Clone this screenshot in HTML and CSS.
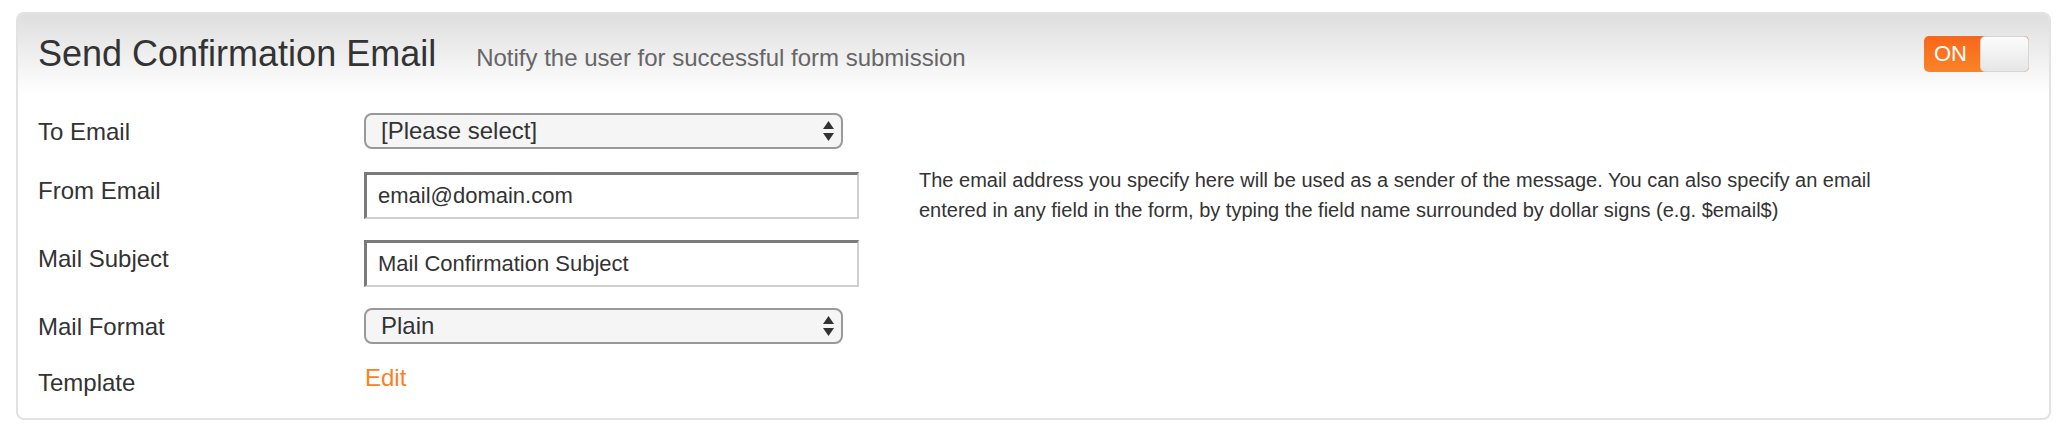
FILE: index.html
```html
<!DOCTYPE html>
<html lang="en">
<head>
<meta charset="utf-8">
<title>Send Confirmation Email</title>
<link rel="stylesheet" href="styles.css">
</head>
<body>
<section class="panel">
  <header class="panel-head">
    <div class="head-text">
      <h2 class="title">Send Confirmation Email</h2>
      <span class="subtitle">Notify the user for successful form submission</span>
    </div>
    <div class="toggle">
      <span class="toggle-label">ON</span>
      <span class="toggle-knob"></span>
    </div>
  </header>
  <div class="panel-body">
    <div class="row">
      <label class="label">To Email</label>
      <div class="select">
        <span>[Please select]</span>
        <svg class="arrows" width="11" height="20" viewBox="0 0 11 20"><polygon points="0,8 5.5,0 11,8" fill="#333"/><polygon points="0,12 11,12 5.5,20" fill="#333"/></svg>
      </div>
    </div>
    <div class="row">
      <label class="label">From Email</label>
      <div class="input">email@domain.com</div>
      <p class="help">The email address you specify here will be used as a sender of the message. You can also specify an email entered in any field in the form, by typing the field name surrounded by dollar signs (e.g. $email$)</p>
    </div>
    <div class="row">
      <label class="label">Mail Subject</label>
      <div class="input">Mail Confirmation Subject</div>
    </div>
    <div class="row">
      <label class="label">Mail Format</label>
      <div class="select">
        <span>Plain</span>
        <svg class="arrows" width="11" height="20" viewBox="0 0 11 20"><polygon points="0,8 5.5,0 11,8" fill="#333"/><polygon points="0,12 11,12 5.5,20" fill="#333"/></svg>
      </div>
    </div>
    <div class="row row-last">
      <label class="label">Template</label>
      <a class="edit" href="#">Edit</a>
    </div>
  </div>
</section>
</body>
</html>
```
FILE: styles.css
```css
* { box-sizing: border-box; }
html, body { background: #fff; }
body {
  margin: 12px 15px 0 16px;
  font-family: "Liberation Sans", Arial, Helvetica, sans-serif;
  color: #333;
}
.panel {
  border: 2px solid #e2e2e2;
  border-radius: 8px;
  overflow: hidden;
  background: #fff;
}
.panel-head {
  display: flex;
  align-items: center;
  justify-content: space-between;
  padding: 20px;
  background: linear-gradient(#dedede, #ffffff);
}
.head-text {
  display: flex;
  align-items: baseline;
}
.title {
  margin: 0;
  font-weight: normal;
  font-size: 36px;
  line-height: 40px;
  color: #333;
}
.subtitle {
  margin-left: 40px;
  font-size: 24px;
  color: #666;
}
.toggle {
  display: flex;
  width: 105px;
  height: 36px;
  border-radius: 5px;
  background: linear-gradient(#f8661a, #f98428);
}
.toggle-label {
  flex: 1;
  color: #fff;
  font-size: 22px;
  line-height: 36px;
  padding-left: 10px;
}
.toggle-knob {
  width: 49px;
  height: 36px;
  border: 1px solid #d6d6d6;
  border-radius: 5px;
  background: linear-gradient(#fcfcfc, #e6e6e6);
}
.panel-body {
  padding: 19px 20px 16px 20px;
  display: flex;
  flex-direction: column;
  gap: 21px;
}
.row {
  display: flex;
  align-items: flex-start;
}
.row-last {
  margin-top: -3px;
}
.label {
  width: 326px;
  flex: none;
  font-size: 24px;
  line-height: 38px;
  color: #333;
}
.select {
  width: 479px;
  height: 36px;
  display: flex;
  align-items: center;
  justify-content: space-between;
  padding: 0 7px 0 15px;
  border: 2px solid #999;
  border-radius: 8px;
  background: #f5f5f5;
  font-size: 24px;
  color: #333;
}
.arrows { display: block; }
.input {
  width: 495px;
  height: 47px;
  flex: none;
  padding-left: 11px;
  display: flex;
  align-items: center;
  font-size: 22px;
  color: #333;
  border-top: 3px solid #7a7a7a;
  border-left: 3px solid #7a7a7a;
  border-right: 2px solid #cfcfcf;
  border-bottom: 2px solid #cfcfcf;
  background: #fff;
}
.help {
  width: 1000px;
  margin: -7px 0 -7px 60px;
  font-size: 20px;
  line-height: 30px;
  color: #333;
}
.edit {
  font-size: 24px;
  line-height: 28px;
  color: #f7821f;
  text-decoration: none;
  margin-left: 1px;
}
```
